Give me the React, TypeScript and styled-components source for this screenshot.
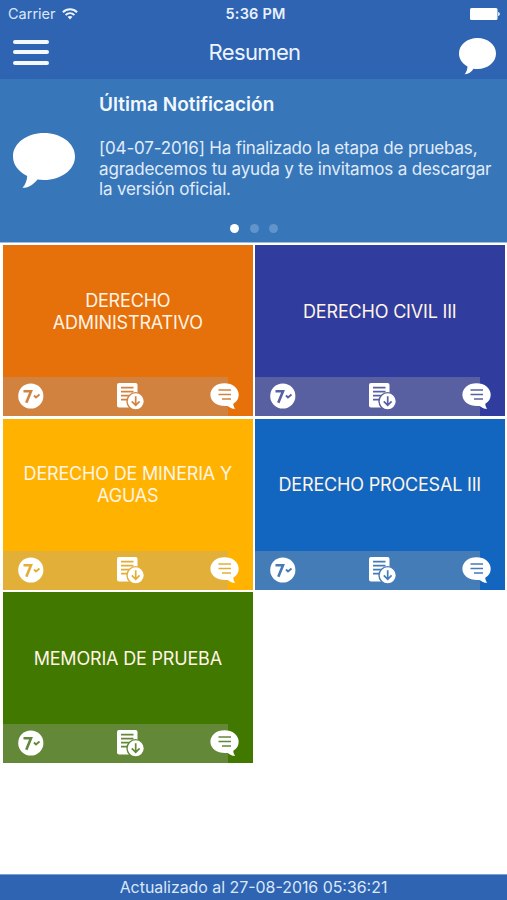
import React from "react";
import styled, { createGlobalStyle } from "styled-components";

const GlobalStyle = createGlobalStyle`
  * { box-sizing: border-box; }
  body { margin: 0; background: #fff; font-family: Inter, "Liberation Sans", sans-serif; }
`;

const Screen = styled.div`
  width: 507px;
  height: 900px;
  display: flex;
  flex-direction: column;
  overflow: hidden;
  background: #fff;
`;

const Header = styled.header`
  height: 79px;
  flex: none;
  background: #2e64b1;
  color: #fff;
`;

const StatusBar = styled.div`
  height: 27px;
  display: grid;
  grid-template-columns: 1fr auto 1fr;
  align-items: center;
  padding: 1px 7px 0 8px;
`;

const Carrier = styled.div`
  display: flex;
  align-items: center;
  gap: 6px;
  font-size: 14.5px;
  line-height: 18px;
  color: #dbe7fa;
`;

const Clock = styled.div`
  padding-left: 3px;
  font-size: 14.5px;
  line-height: 18px;
  font-weight: 600;
  letter-spacing: 0.2px;
  color: #e9f1ff;
`;

const BatterySlot = styled.div`
  display: flex;
  justify-content: flex-end;
`;

const NavBar = styled.div`
  height: 52px;
  display: grid;
  grid-template-columns: 1fr auto 1fr;
  padding: 0 11px 0 13px;
`;

const MenuButton = styled.div`
  width: 36px;
  padding-top: 13px;
  display: flex;
  flex-direction: column;
  gap: 6.4px;
`;

const MenuLine = styled.span`
  height: 4px;
  border-radius: 2px;
  background: #f4f8ff;
`;

const Title = styled.h1`
  margin: 0;
  padding-top: 11px;
  font-size: 22px;
  line-height: 28px;
  font-weight: 400;
  letter-spacing: -0.65px;
  color: #edf3ff;
`;

const NavAction = styled.div`
  display: flex;
  justify-content: flex-end;
  padding-top: 10.7px;
`;

const Notice = styled.section`
  height: 164px;
  flex: none;
  display: flex;
  flex-direction: column;
  background: #3776b9;
  border-bottom: 1px solid #9dbde0;
`;

const NoticeBody = styled.div`
  height: 144px;
  display: flex;
  padding: 0 0 0 13px;
`;

const NoticeIcon = styled.div`
  width: 86px;
  flex: none;
  padding-top: 54px;
`;

const NoticeTitle = styled.h2`
  margin: 0;
  padding-top: 13px;
  font-size: 19px;
  line-height: 25px;
  font-weight: 600;
  color: #f3f8ff;
`;

const NoticeText = styled.p`
  margin: 21.4px 0 0;
  font-size: 17px;
  line-height: 20.3px;
  letter-spacing: -0.17px;
  white-space: nowrap;
  color: #e0ecfa;
`;

const Dots = styled.div`
  display: flex;
  justify-content: center;
  gap: 10.7px;
  padding: 1px 0 0 1px;
`;

const Dot = styled.span<{ $active?: boolean }>`
  width: 9px;
  height: 9px;
  border-radius: 50%;
  background: ${(p) => (p.$active ? "#fff" : "#6094cb")};
`;

const Grid = styled.main`
  flex: 1;
  display: grid;
  grid-template-columns: 249.6px 249.6px;
  grid-auto-rows: 170.8px;
  column-gap: 2.4px;
  row-gap: 2.8px;
  padding: 2.2px 3px;
`;

const Tile = styled.article<{ $color: string }>`
  display: flex;
  flex-direction: column;
  background: ${(p) => p.$color};
`;

const TileName = styled.div`
  flex: 1;
  display: flex;
  align-items: center;
  justify-content: center;
  padding-top: 1.4px;
  text-align: center;
  font-size: 18px;
  line-height: 22px;
  letter-spacing: -0.18px;
  white-space: pre-line;
  color: #fff4e6;
`;

const TileBar = styled.div`
  width: 225px;
  height: 39px;
  display: flex;
  padding: 5px 0 0 15px;
  background: rgba(167, 167, 167, 0.335);
`;

const TileIcon = styled.span<{ $width: number }>`
  width: ${(p) => p.$width}px;
  flex: none;
  svg { display: block; }
`;

const Footer = styled.footer`
  height: 26px;
  flex: none;
  border-top: 1px solid #7d9fce;
  background: #2e64b1;
  color: #dbe7fa;
  text-align: center;
  font-size: 15.9px;
  line-height: 25px;
`;

function Bubble({ width, height }: { width: number; height: number }) {
  return (
    <svg width={width} height={height} viewBox="0 0 62 56" preserveAspectRatio="none" fill="#fff">
      <path d="M31 0C48 0 62 10 62 23.5S48 47 31 47C28.500 47 26.500 46.800 24.500 46.500C20.500 51.500 15.500 55 9.500 54.800C12.500 51.500 14 47.500 14.200 43C5.500 38.500 0 32 0 23.500C0 10 14 0 31 0Z" />
    </svg>
  );
}

function Wifi() {
  return (
    <svg width="16" height="12" viewBox="0 0 16 12" fill="none" stroke="#edf4ff" strokeWidth="2">
      <path d="M.9 4.300C5 .3 11 .3 15.100 4.300M3.600 7C6.200 4.600 9.800 4.600 12.400 7" />
      <path d="M5.500 8.800C7 7.600 9 7.600 10.500 8.800L8 11.400Z" fill="#edf4ff" stroke="none" />
    </svg>
  );
}

function Battery() {
  return (
    <svg width="30" height="12" viewBox="0 0 30 12" fill="#fff">
      <rect width="27.500" height="12" rx="1.500" />
      <path d="M28.200 4C30.300 4.600 30.300 7.400 28.200 8Z" />
    </svg>
  );
}

function GradeIcon({ ink }: { ink: string }) {
  return (
    <svg width="26" height="28" viewBox="0 0 26 28" fill="none" stroke={ink}>
      <circle cx="12.800" cy="14" r="12.600" fill="#fff" stroke="none" />
      <path d="M5.500 9.300H13L8.300 20.800" strokeWidth="2.600" />
      <path d="M16 13.500L18 15.500L21.500 12.600" strokeWidth="1.900" />
    </svg>
  );
}

function FileIcon({ ink }: { ink: string }) {
  return (
    <svg width="29" height="28" viewBox="0 0 29 28" fill="none" stroke={ink}>
      <path d="M3 1H19.500Q21.500 1 21.500 3V12L14 25.500H3Q1 25.500 1 23.500V3Q1 1 3 1Z" fill="#fff" stroke="none" />
      <path d="M5 5.700H17.500M5 9.700H17.500M5 13.700H13M5 17.700H11" strokeWidth="1.700" />
      <circle cx="19.700" cy="19.300" r="8.700" fill="#fff" strokeWidth="1.400" />
      <path d="M19.700 14.200V23.200M15.800 19.400L19.700 23.300L23.600 19.400" strokeWidth="1.700" />
    </svg>
  );
}

function CommentIcon({ ink }: { ink: string }) {
  return (
    <svg width="29" height="28" viewBox="0 0 29 28" fill="none" stroke={ink}>
      <path d="M14.500 1.200C22.500 1.200 28.700 6 28.700 12.700C28.700 16.700 26.800 19.700 23.300 21.700C23.300 23.700 24 25.200 25.300 26.800C21.800 26.700 19.500 25.500 17.700 23.900C8 24.900.4 20 .4 12.700C.4 6 6.500 1.200 14.500 1.200Z" fill="#fff" stroke="none" />
      <path d="M8.500 8H21M8.500 12.500H21M12 17H21" strokeWidth="1.500" />
    </svg>
  );
}

const subjects = [
  { name: "DERECHO\nADMINISTRATIVO", color: "#e6700a", ink: "#d28341" },
  { name: "DERECHO CIVIL III", color: "#303d9e", ink: "#5860a2" },
  { name: "DERECHO DE MINERIA Y\nAGUAS", color: "#ffb300", ink: "#e3ae36" },
  { name: "DERECHO PROCESAL III", color: "#1366c0", ink: "#457bb8" },
  { name: "MEMORIA DE PRUEBA", color: "#417800", ink: "#638839" },
];

export default function App() {
  return (
    <>
      <GlobalStyle />
      <Screen>
        <Header>
          <StatusBar>
            <Carrier>Carrier <Wifi /></Carrier>
            <Clock>5:36 PM</Clock>
            <BatterySlot><Battery /></BatterySlot>
          </StatusBar>
          <NavBar>
            <MenuButton><MenuLine /><MenuLine /><MenuLine /></MenuButton>
            <Title>Resumen</Title>
            <NavAction><Bubble width={37} height={37} /></NavAction>
          </NavBar>
        </Header>
        <Notice>
          <NoticeBody>
            <NoticeIcon><Bubble width={62} height={56} /></NoticeIcon>
            <div>
              <NoticeTitle>Última Notificación</NoticeTitle>
              <NoticeText>
                [04-07-2016] Ha finalizado la etapa de pruebas,<br />
                agradecemos tu ayuda y te invitamos a descargar<br />
                la versión oficial.
              </NoticeText>
            </div>
          </NoticeBody>
          <Dots><Dot $active /><Dot /><Dot /></Dots>
        </Notice>
        <Grid>
          {subjects.map((s) => (
            <Tile key={s.name} $color={s.color}>
              <TileName>{s.name}</TileName>
              <TileBar>
                <TileIcon $width={98}><GradeIcon ink={s.ink} /></TileIcon>
                <TileIcon $width={94}><FileIcon ink={s.ink} /></TileIcon>
                <TileIcon $width={29}><CommentIcon ink={s.ink} /></TileIcon>
              </TileBar>
            </Tile>
          ))}
        </Grid>
        <Footer>Actualizado al 27-08-2016 05:36:21</Footer>
      </Screen>
    </>
  );
}
